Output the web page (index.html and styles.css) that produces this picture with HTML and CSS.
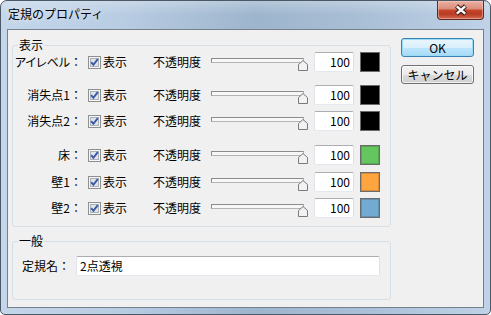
FILE: index.html
```html
<!DOCTYPE html>
<html lang="ja">
<head>
<meta charset="utf-8">
<title>定規のプロパティ</title>
<link rel="stylesheet" href="styles.css">
</head>
<body>
<div class="window">
  <div class="titlebar">
    <span class="title">定規のプロパティ</span>
    <button class="close" aria-label="閉じる">
      <svg width="14" height="12" viewBox="0 0 14 12"><path d="M2.5 2 L11.5 10 M11.5 2 L2.5 10" stroke="#3d1c16" stroke-width="4.4"/><path d="M2.8 2.3 L11.2 9.7 M11.2 2.3 L2.8 9.7" stroke="#ffffff" stroke-width="2.4"/></svg>
    </button>
  </div>
  <div class="client">
    <div class="groups">
      <fieldset class="group group-display">
        <legend>表示</legend>
        <div class="row">
          <span class="label"><span class="palt">アイレベル</span>：</span>
          <span class="check"><svg class="cb" width="13" height="13" viewBox="0 0 13 13"><rect x="0.5" y="0.5" width="12" height="12" fill="#f6f6f6" stroke="#8e8f8f"/><rect x="2.5" y="2.5" width="8" height="8" fill="#dfe4ea" stroke="#aab0b8"/><path d="M3.2 6.2 L5.4 8.8 L9.8 3.2" fill="none" stroke="#3b58a6" stroke-width="1.9"/></svg>表示</span>
          <span class="op">不透明度</span>
          <span class="slider"><span class="track"></span><svg class="thumb" width="10" height="11" viewBox="0 0 10 11"><path d="M0.5 4.5 L5 0.5 L9.5 4.5 L9.5 10.5 L0.5 10.5 Z" fill="#f2f2f2" stroke="#7a7a7a"/></svg></span>
          <span class="num">100</span>
          <span class="swatch sw-black"></span>
        </div>
        <div class="row gap-13">
          <span class="label">消失点1：</span>
          <span class="check"><svg class="cb" width="13" height="13" viewBox="0 0 13 13"><rect x="0.5" y="0.5" width="12" height="12" fill="#f6f6f6" stroke="#8e8f8f"/><rect x="2.5" y="2.5" width="8" height="8" fill="#dfe4ea" stroke="#aab0b8"/><path d="M3.2 6.2 L5.4 8.8 L9.8 3.2" fill="none" stroke="#3b58a6" stroke-width="1.9"/></svg>表示</span>
          <span class="op">不透明度</span>
          <span class="slider"><span class="track"></span><svg class="thumb" width="10" height="11" viewBox="0 0 10 11"><path d="M0.5 4.5 L5 0.5 L9.5 4.5 L9.5 10.5 L0.5 10.5 Z" fill="#f2f2f2" stroke="#7a7a7a"/></svg></span>
          <span class="num">100</span>
          <span class="swatch sw-black"></span>
        </div>
        <div class="row gap-6">
          <span class="label">消失点2：</span>
          <span class="check"><svg class="cb" width="13" height="13" viewBox="0 0 13 13"><rect x="0.5" y="0.5" width="12" height="12" fill="#f6f6f6" stroke="#8e8f8f"/><rect x="2.5" y="2.5" width="8" height="8" fill="#dfe4ea" stroke="#aab0b8"/><path d="M3.2 6.2 L5.4 8.8 L9.8 3.2" fill="none" stroke="#3b58a6" stroke-width="1.9"/></svg>表示</span>
          <span class="op">不透明度</span>
          <span class="slider"><span class="track"></span><svg class="thumb" width="10" height="11" viewBox="0 0 10 11"><path d="M0.5 4.5 L5 0.5 L9.5 4.5 L9.5 10.5 L0.5 10.5 Z" fill="#f2f2f2" stroke="#7a7a7a"/></svg></span>
          <span class="num">100</span>
          <span class="swatch sw-black"></span>
        </div>
        <div class="row gap-14">
          <span class="label">床：</span>
          <span class="check"><svg class="cb" width="13" height="13" viewBox="0 0 13 13"><rect x="0.5" y="0.5" width="12" height="12" fill="#f6f6f6" stroke="#8e8f8f"/><rect x="2.5" y="2.5" width="8" height="8" fill="#dfe4ea" stroke="#aab0b8"/><path d="M3.2 6.2 L5.4 8.8 L9.8 3.2" fill="none" stroke="#3b58a6" stroke-width="1.9"/></svg>表示</span>
          <span class="op">不透明度</span>
          <span class="slider"><span class="track"></span><svg class="thumb" width="10" height="11" viewBox="0 0 10 11"><path d="M0.5 4.5 L5 0.5 L9.5 4.5 L9.5 10.5 L0.5 10.5 Z" fill="#f2f2f2" stroke="#7a7a7a"/></svg></span>
          <span class="num">100</span>
          <span class="swatch sw-green"></span>
        </div>
        <div class="row gap-7">
          <span class="label">壁1：</span>
          <span class="check"><svg class="cb" width="13" height="13" viewBox="0 0 13 13"><rect x="0.5" y="0.5" width="12" height="12" fill="#f6f6f6" stroke="#8e8f8f"/><rect x="2.5" y="2.5" width="8" height="8" fill="#dfe4ea" stroke="#aab0b8"/><path d="M3.2 6.2 L5.4 8.8 L9.8 3.2" fill="none" stroke="#3b58a6" stroke-width="1.9"/></svg>表示</span>
          <span class="op">不透明度</span>
          <span class="slider"><span class="track"></span><svg class="thumb" width="10" height="11" viewBox="0 0 10 11"><path d="M0.5 4.5 L5 0.5 L9.5 4.5 L9.5 10.5 L0.5 10.5 Z" fill="#f2f2f2" stroke="#7a7a7a"/></svg></span>
          <span class="num">100</span>
          <span class="swatch sw-orange"></span>
        </div>
        <div class="row gap-6">
          <span class="label">壁2：</span>
          <span class="check"><svg class="cb" width="13" height="13" viewBox="0 0 13 13"><rect x="0.5" y="0.5" width="12" height="12" fill="#f6f6f6" stroke="#8e8f8f"/><rect x="2.5" y="2.5" width="8" height="8" fill="#dfe4ea" stroke="#aab0b8"/><path d="M3.2 6.2 L5.4 8.8 L9.8 3.2" fill="none" stroke="#3b58a6" stroke-width="1.9"/></svg>表示</span>
          <span class="op">不透明度</span>
          <span class="slider"><span class="track"></span><svg class="thumb" width="10" height="11" viewBox="0 0 10 11"><path d="M0.5 4.5 L5 0.5 L9.5 4.5 L9.5 10.5 L0.5 10.5 Z" fill="#f2f2f2" stroke="#7a7a7a"/></svg></span>
          <span class="num">100</span>
          <span class="swatch sw-blue"></span>
        </div>
      </fieldset>
      <fieldset class="group group-general">
        <legend>一般</legend>
        <div class="row gap-8">
          <span class="label2">定規名：</span>
          <span class="field">2点透視</span>
        </div>
      </fieldset>
    </div>
    <div class="buttons">
      <button class="btn btn-default">OK</button>
      <button class="btn palt">キャンセル</button>
    </div>
  </div>
</div>
</body>
</html>
```

FILE: styles.css
```css
* { box-sizing: border-box; }
html, body { margin: 0; background: #ffffff; }
body {
  font-family: "Noto Sans CJK JP", "Noto Sans", sans-serif;
  font-size: 12px;
  color: #000;
}
.palt { font-feature-settings: "palt" 1; }

.window {
  width: 491px;
  height: 315px;
  border: 1px solid #4b5866;
  border-radius: 7px 7px 5px 5px;
  background:
    linear-gradient(180deg, rgba(255,255,255,0.25) 0px, rgba(255,255,255,0) 14px),
    linear-gradient(90deg, #c4d6ea 0%, #b8cce2 25%, #9db5cd 52%, #a8bed5 72%, #bfd2e7 100%);
  display: flex;
  flex-direction: column;
  overflow: hidden;
}
.titlebar {
  height: 28px;
  display: flex;
  align-items: flex-start;
  flex: none;
}
.title {
  margin: 5px 0 0 7px;
  line-height: 16px;
  color: #000;
  text-shadow: 0 0 6px rgba(255,255,255,0.8);
}
.close {
  margin: -1px 6px 0 auto;
  width: 47px;
  height: 20px;
  padding: 0;
  border: 1px solid #5c2a22;
  border-top-color: #4b5866;
  border-radius: 0 0 4px 4px;
  background: linear-gradient(180deg, #e9b1a4 0%, #dc8e7c 42%, #c6452b 52%, #b93a23 72%, #d36c53 100%);
  box-shadow: inset 0 0 0 1px rgba(255,210,200,0.45);
  display: flex;
  align-items: center;
  justify-content: center;
}
.close svg { display: block; }

.client {
  flex: 1;
  margin: 0 6px 6px;
  border: 1px solid #76808c;
  background: #f0f0f0;
  display: flex;
  align-items: flex-start;
}
.groups {
  margin-left: 4px;
  width: 379px;
}
.group {
  margin: 0;
  padding: 0;
  border: 1px solid #d5dfe5;
  border-radius: 3px;
  min-width: 0;
}
.group legend {
  margin-left: 5px;
  padding: 0 1px;
  line-height: 14px;
  height: 14px;
}
.group-display { margin-top: 8px; padding-bottom: 8px; }
.group-general { margin-top: 7px; padding-bottom: 23px; }

.row {
  display: flex;
  align-items: center;
  height: 20px;
}
.gap-6 { margin-top: 6px; }
.gap-7 { margin-top: 7px; }
.gap-8 { margin-top: 8px; }
.gap-13 { margin-top: 13px; }
.gap-14 { margin-top: 14px; }

.label {
  width: 69px;
  margin-right: 6px;
  text-align: right;
  white-space: nowrap;
  line-height: 20px;
}
.check {
  width: 65px;
  display: flex;
  align-items: center;
  line-height: 20px;
}
.cb { display: block; margin-right: 2px; flex: none; }
.op {
  width: 48px;
  margin-right: 10px;
  white-space: nowrap;
  line-height: 20px;
}
.slider {
  position: relative;
  width: 97px;
  height: 20px;
  margin-right: 6px;
}
.track {
  display: block;
  margin-top: 6px;
  width: 93px;
  height: 5px;
  border: 1px solid #8c8c8c;
  border-right-color: #b4b4b4;
  border-bottom-color: #b4b4b4;
  background: #f7f7f7;
}
.thumb {
  position: absolute;
  left: 87px;
  top: 8px;
  display: block;
}
.num {
  width: 40px;
  height: 20px;
  margin-right: 6px;
  border: 1px solid;
  border-color: #abadb3 #dbdfe6 #e3e9ef #e2e3ea;
  border-radius: 2px;
  background: #fff;
  text-align: right;
  padding-right: 3px;
  line-height: 18px;
}
.swatch {
  width: 20px;
  height: 20px;
  border: 1px solid #6b6b6b;
  box-shadow: inset 0 0 0 1px rgba(0,0,0,0.15);
}
.sw-black { background: #000000; }
.sw-green { background: #64c65f; }
.sw-orange { background: #ffa53f; }
.sw-blue { background: #72aad2; }

.label2 {
  margin-left: 9px;
  width: 48px;
  margin-right: 6px;
  white-space: nowrap;
  line-height: 20px;
}
.field {
  width: 304px;
  height: 20px;
  border: 1px solid;
  border-color: #abadb3 #dbdfe6 #e3e9ef #e2e3ea;
  border-radius: 2px;
  background: #fff;
  padding-left: 3px;
  line-height: 18px;
}

.buttons {
  margin-left: 10px;
  width: 73px;
  padding-top: 8px;
  display: flex;
  flex-direction: column;
  gap: 8px;
}
.btn {
  width: 73px;
  height: 19px;
  padding: 0;
  border: 1px solid #707070;
  border-radius: 3px;
  background: linear-gradient(180deg, #f2f2f2 0%, #ebebeb 50%, #dddddd 50%, #cfcfcf 100%);
  box-shadow: inset 0 0 0 1px rgba(255,255,255,0.7);
  font: inherit;
  color: #000;
  line-height: 17px;
}
.btn-default {
  border-color: #3c7fb1;
  background: linear-gradient(180deg, #eaf6fd 0%, #d9f0fc 50%, #bee6fd 50%, #a7d9f5 100%);
  box-shadow: inset 0 0 0 1px #98dcf6;
}
```
